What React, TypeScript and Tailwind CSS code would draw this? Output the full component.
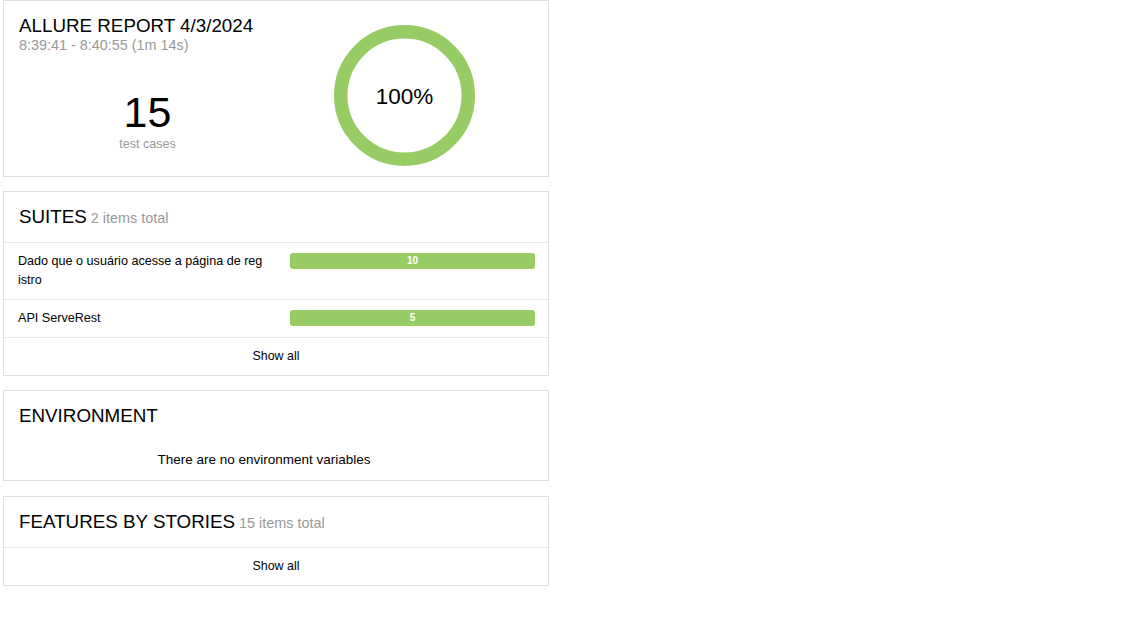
import React from "react";

const GREEN = "#97cc64";

function Bar({ value, mt }: { value: number; mt: string }) {
  return (
    <div className={`w-[245px] shrink-0 ${mt}`}>
      <div className="h-[16px] rounded-[3px] bg-[#97cc64] flex items-center justify-center text-white font-bold text-[10px] leading-[16px]">
        {value}
      </div>
    </div>
  );
}

function Donut() {
  return (
    <div className="relative w-[141px] h-[141px]">
      <svg width="141" height="141" viewBox="0 0 141 141">
        <circle cx="70.5" cy="70.5" r="63.75" fill="none" stroke={GREEN} strokeWidth="13.5" />
      </svg>
      <div className="absolute inset-0 flex items-center justify-center pt-[3px] text-[22.5px] leading-none text-black">
        100%
      </div>
    </div>
  );
}

function Header({ title, sub, border }: { title: string; sub?: string; border?: boolean }) {
  return (
    <div className={`px-[15px] pt-[14px] pb-[14px] ${border ? "border-b border-[#e8e8e8]" : ""}`}>
      <div className="flex items-baseline h-[22px] overflow-visible">
        <span className="text-[18.8px] leading-[22px] text-black whitespace-pre">{title}</span>
        {sub && <span className="text-[14.4px] leading-[22px] text-[#999999] whitespace-pre"> {sub}</span>}
      </div>
    </div>
  );
}

export default function App() {
  return (
    <div
      className="w-[1123px] h-[641px] bg-white pl-[3px]"
      style={{ fontFamily: '"Liberation Sans", Arial, sans-serif' }}
    >
      <div className="w-[546px] flex flex-col">
        {/* Summary card */}
        <div className="border border-[#e0e0e0] px-[15px] pt-[14px] pb-[10px] flex">
          <div className="flex-1 flex flex-col">
            <div className="text-[18.8px] leading-[22px] text-black">ALLURE REPORT 4/3/2024</div>
            <div className="text-[14.4px] leading-[17px] text-[#999999]">8:39:41 - 8:40:55 (1m 14s)</div>
            <div className="mt-[37px] text-center text-[43px] leading-[43px] text-black">15</div>
            <div className="mt-[3px] text-center text-[12.6px] leading-[14px] text-[#999999]">test cases</div>
          </div>
          <div className="flex-1 flex justify-center pt-[10px]">
            <Donut />
          </div>
        </div>

        {/* Suites */}
        <div className="mt-[14px] border border-[#e0e0e0]">
          <Header title="SUITES" sub="2 items total" border />
          <div className="flex pl-[14px] pr-[13px] py-[9px] border-b border-[#e8e8e8]">
            <div className="flex-1 text-[12.6px] leading-[19px] text-black">
              Dado que o usuário acesse a página de reg
              <br />
              istro
            </div>
            <Bar value={10} mt="mt-[1px]" />
          </div>
          <div className="flex pl-[14px] pr-[13px] py-[9px] border-b border-[#e8e8e8]">
            <div className="flex-1 text-[12.6px] leading-[19px] text-black">API ServeRest</div>
            <Bar value={5} mt="mt-[1px]" />
          </div>
          <div className="py-[9px] text-center text-[12.4px] leading-[19px] text-black">Show all</div>
        </div>

        {/* Environment */}
        <div className="mt-[14px] border border-[#e0e0e0]">
          <Header title="ENVIRONMENT" />
          <div className="pt-[11px] pb-[12px] pr-[24px] text-center text-[13.5px] leading-[16px] text-black">
            There are no environment variables
          </div>
        </div>

        {/* Features by stories */}
        <div className="mt-[15px] border border-[#e0e0e0]">
          <Header title="FEATURES BY STORIES" sub="15 items total" border />
          <div className="py-[9px] text-center text-[12.4px] leading-[19px] text-black">Show all</div>
        </div>
      </div>
    </div>
  );
}
